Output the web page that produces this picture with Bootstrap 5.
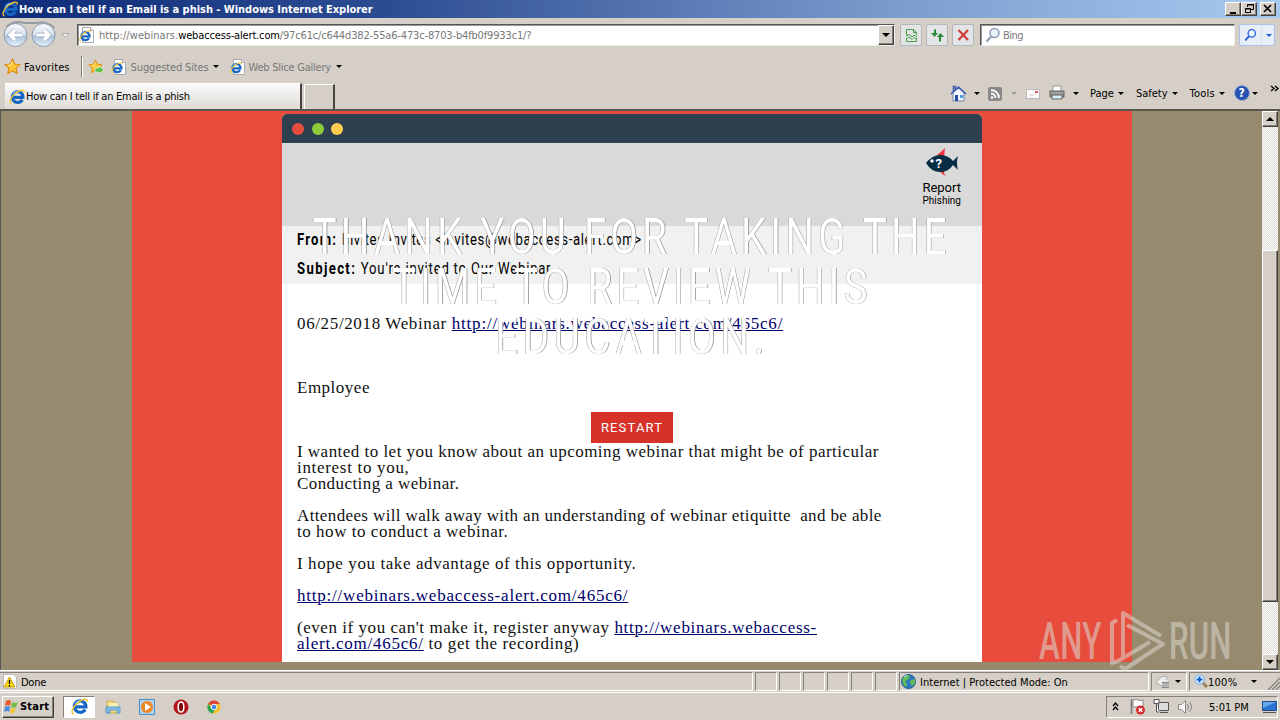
<!DOCTYPE html>
<html lang="en">
<head>
  <meta charset="UTF-8" />
  <meta name="viewport" content="width=device-width, initial-scale=1" />
  <title>How can I tell if an Email is a phish</title>
  <link href="https://cdn.jsdelivr.net/npm/bootstrap@5.3.3/dist/css/bootstrap.min.css" rel="stylesheet">
  <style>
    body { width: 1280px; height: 720px; overflow: hidden; background: #d5cfc7; color: #000; font: 11px/14px "DejaVu Sans Condensed", "DejaVu Sans", sans-serif; }
    svg { display: block; flex: none; }
    .fit { display: inline-block; white-space: pre; flex: none; }
    .chrome-text .fit { padding-top: 2px; }
    .greyed { color: #777; }
    .caret { width: 0; height: 0; flex: none; border: 3px solid transparent; border-top-color: #000; border-bottom: 0; }
    .bevel { background: #d5cfc7; border: 1px solid; border-color: #fff #404040 #404040 #fff; box-shadow: inset -1px -1px #858078; }
    .sunken { border: 1px solid; border-color: #858078 #fff #fff #858078; }

    .title-bar { height: 18px; background: linear-gradient(90deg, #0f2c78, #2c4c92 30%, #7b9ccd 70%, #a6caf0); padding-left: 2px; color: #fff; font-weight: bold; }
    .win-btn { width: 16px; height: 14px; }
    .address-row { height: 34px; padding-left: 2px; }
    .field { height: 22px; background: #fff; border: 1px solid; border-color: #555 #eee #eee #555; box-shadow: inset 1px 1px #999; }
    .tool-btn { width: 22px; height: 22px; border: 1px solid #b4b7bc; border-radius: 2px; background: #e3e4e6; }
    .fav-row { height: 29px; }
    .tab-row { height: 28px; padding-left: 5px; }
    .tab-on { width: 297px; height: 26px; background: linear-gradient(#fafafa, #dedbd6); border-right: 2px solid #444; border-top: 1px solid #fff; }
    .tab-new { width: 31px; height: 25px; border: 1px solid #fff; border-right: 2px solid #444; border-bottom: 0; }

    .viewport { height: 561px; background: #978b6f; border-left: 1px solid #555; border-top: 2px solid #5a574f; }
    .scroller { width: 16px; margin-right: 2px; background: repeating-conic-gradient(#fff 0 25%, #dcd8d2 0 50%) 0 0/2px 2px; }
    .scroller .bevel { width: 16px; height: 16px; }
    .thumb { margin-top: 123px; height: 352px !important; }
    .red-page { width: 1000px; height: 551px; margin-left: 131px; background: #e84c3d; padding-top: 3px; }
    .mail { width: 700px; height: 548px; background: #fff; border-radius: 5px 5px 0 0; overflow: hidden; }
    .mail-bar { height: 29px; background: #2e3f50; padding-left: 10px; gap: 7.5px; }
    .dot { width: 12px; height: 12px; border-radius: 50%; }
    .mail-tools { height: 83px; background: #d9d9d9; font-family: Roboto, sans-serif; }
    .mail-head { height: 58px; background: #f1f1f1; padding: 4px 15px 0; font: 16px/20px Roboto, sans-serif; }
    .mail-head > div { height: 29px; white-space: pre; }
    .squeeze { display: inline-block; transform: scaleX(.82); transform-origin: 0 50%; }
    .mail-body { padding: 32px 15px 0; font: 17px/16px "Liberation Serif", serif; color: #111; }
    .mail-body > div { height: 16px; white-space: pre; }
    .mail-body a { color: #00006b; text-underline-offset: 1px; text-decoration-thickness: 1px; }

    .thanks { left: 0; right: 0; top: 101px; }
    .thanks h1 { font: 400 50px/50px Roboto, sans-serif; color: #fff; margin: 0; text-shadow: .8px 0 #8a8a8a, -.6px 0 #a5a5a5; will-change: transform; }
    .thanks h1 span { transform: scaleX(.8); }
    .restart { margin-top: 50px; width: 82px; height: 31px; border: 0; border-radius: 0; padding: 0; background: #d73229; color: #fff; font: 13px/31px Roboto, sans-serif; }

    .watermark { left: 1038px; top: 608px; width: 196px; height: 66px; opacity: .55; }
    .status { height: 22px; border-top: 1px solid #fff; padding-top: 1px; gap: 2px; }
    .status > div { height: 19px; }
    .cell { width: 22px; }
    .task-bar { height: 27px; border-top: 1px solid #fff; padding-left: 2px; padding-top: 1px; }
    .start { width: 52px; height: 22px; font-weight: bold; }
    .running { width: 32px; height: 22px; background: #fff; }
    .tray { width: 172px; height: 22px; }
  </style>
</head>
<body>

  <svg width="0" height="0" class="position-absolute">
    <symbol id="ie" viewBox="0 0 16 16">
      <path d="M13.300 10.800A5.400 5.400 0 1 1 14 8.400H4.600" fill="none" stroke="#1766c4" stroke-width="3.100"/>
      <path d="M4 6.200A4.900 4.900 0 0 1 9 2.800" fill="none" stroke="#63b5f2" stroke-width="1.400"/>
      <path d="M2.600 15C-.8 14 1.800 8 6.500 4.300 10.500 1 16-.4 15 3.600" fill="none" stroke="#f1c43a" stroke-width="1.400"/>
    </symbol>
    <symbol id="iepage" viewBox="0 0 16 16">
      <path d="M3.500.5h8l3 3v12h-11z" fill="#fff" stroke="#a9a9a9"/>
      <path d="M11.500.5v3h3" fill="#eee" stroke="#a9a9a9"/>
      <use href="#ie" x="0" y="3" width="12" height="12"/>
    </symbol>
    <symbol id="star" viewBox="0 0 16 16">
      <path d="M8 1l2.100 4.600 5 .6-3.700 3.400 1 5L8 12.100 3.600 14.600l1-5L.9 6.200l5-.6z" fill="#fbc62f" stroke="#dc8a17"/>
      <path d="M8 3.500L6.700 6.600l-3 .4" fill="none" stroke="#fff2a4"/>
    </symbol>
    <symbol id="lens" viewBox="0 0 16 16">
      <circle cx="9.500" cy="6" r="4.500" fill="#eef5fc" stroke="currentColor" stroke-width="1.600"/>
      <path d="M6.300 9.400L1.500 14.500" stroke="currentColor" stroke-width="2.200"/>
    </symbol>
  </svg>

  <!-- Title bar -->
  <div class="title-bar d-flex align-items-center">
    <svg width="16" height="16"><use href="#ie"/></svg>
    <span class="fit" data-w="354" style="margin-left:1px;padding-top:1px">How can I tell if an Email is a phish - Windows Internet Explorer</span>
    <div class="d-flex ms-auto me-1">
      <div class="bevel win-btn"><svg width="14" height="12"><path d="M4 9h6v2H4z"/></svg></div>
      <div class="bevel win-btn"><svg width="14" height="12" fill="none" stroke="#000"><path d="M5.500 4V1.500h6v5H9M5 2h7M3.500 5.500h5v4h-5zM3 6h6"/></svg></div>
      <div class="bevel win-btn" style="margin-left:3px"><svg width="14" height="12"><path d="M3 2l7 7M10 2L3 9" stroke="#000" stroke-width="1.700"/></svg></div>
    </div>
  </div>

  <!-- Address and search -->
  <div class="address-row chrome-text d-flex align-items-center">
    <svg width="75" height="28" viewBox="0 0 75 28">
      <defs><linearGradient id="orb" x2="0" y2="1"><stop offset="0" stop-color="#fafbfc"/><stop offset=".5" stop-color="#d3deea"/><stop offset=".55" stop-color="#a9c0dc"/><stop offset="1" stop-color="#e9f4fb"/></linearGradient></defs>
      <path d="M4 6Q13-1 22 2h12q12-2 18 5" fill="none" stroke="#9a9ca4" stroke-width="2"/>
      <g fill="url(#orb)" stroke="#8d99ac"><circle cx="13.500" cy="14" r="11.500"/><circle cx="41.500" cy="14" r="11.500"/></g>
      <path d="M20 14H8m5-5l-5 5 5 5M35 14h12m-5-5l5 5-5 5" fill="none" stroke="#93a7c2" stroke-width="4.500"/>
      <path d="M20 14H8m5-5l-5 5 5 5M35 14h12m-5-5l5 5-5 5" fill="none" stroke="#fff" stroke-width="3.200"/>
      <path d="M60 12.500h7l-3.500 4z" fill="#eee" stroke="#aaa"/>
    </svg>
    <div class="field d-flex align-items-center" style="width:818px">
      <svg style="margin:0 4px 0 1px" width="16" height="16"><use href="#iepage"/></svg>
      <span class="fit greyed" data-w="79">http://webinars.</span><span class="fit" data-w="102">webaccess-alert.com</span><span class="fit greyed" data-w="252">/97c61c/c644d382-55a6-473c-8703-b4fb0f9933c1/?</span>
      <div class="bevel d-flex align-items-center justify-content-center ms-auto h-100" style="width:16px"><i class="caret" style="border-width:4px 4px 0"></i></div>
    </div>
    <div class="d-flex gap-1 ms-1" style="padding-left:1px">
      <div class="tool-btn p-1"><svg width="13" height="13" viewBox="0 0 13 13" fill="none" stroke="#43a047"><path d="M1.500 6V.5h7l3 3V6M1.500 9v3.500h10V9M8.500.5v3h3M1 7l3-1.500 3 2.500 2-2 3 2M1 10l3-2 3 2.500 2-2 3 2"/></svg></div>
      <div class="tool-btn p-1"><svg width="13" height="13" viewBox="0 0 13 13" fill="#258b38"><path d="M5 0L3 1v3H0l3.500 4L7 4H5zM8 13l2-1V8h3L9.500 4 6 8h2z"/></svg></div>
      <div class="tool-btn p-1"><svg width="13" height="13" viewBox="0 0 13 13" stroke="#d23b3b" stroke-width="2.200"><path d="M1.500 1l9.500 10M11 1l-9.500 10"/></svg></div>
    </div>
    <div class="field d-flex align-items-center greyed" style="width:255px;margin-left:6px">
      <svg class="ms-1" style="margin-right:2px" width="16" height="16" color="#8ba0b6"><use href="#lens"/></svg>
      <span class="fit" data-w="20">Bing</span>
    </div>
    <div class="tool-btn d-flex align-items-center ms-1" style="width:36px;border-color:#abc1e8;background:#e8eef8;color:#2260d8">
      <svg class="mx-1" width="13" height="14"><use href="#lens"/></svg>
      <div class="h-100 border-start d-flex align-items-center ps-1"><i class="caret" style="border-top-color:#2260d8"></i></div>
    </div>
  </div>

  <!-- Favorites -->
  <div class="fav-row chrome-text d-flex align-items-center greyed">
    <svg class="ms-1" width="17" height="17"><use href="#star"/></svg>
    <span class="fit text-black" data-w="46" style="margin-left:3px">Favorites</span>
    <div class="sunken" style="width:2px;height:22px;margin:0 5px 0 11px"></div>
    <svg width="16" height="16" viewBox="0 0 16 16"><use href="#star" width="15" height="15"/><path d="M7 9h4V7l5 4-5 4v-2H7z" fill="#56bd45" stroke="#fff" stroke-width=".6"/></svg>
    <svg style="margin:0 4px 0 7px" width="16" height="16"><use href="#iepage"/></svg>
    <span class="fit" data-w="78">Suggested Sites</span><i class="caret" style="margin:0 11px 0 4px"></i>
    <svg style="margin-right:3px" width="16" height="16"><use href="#iepage"/></svg>
    <span class="fit" data-w="82">Web Slice Gallery</span><i class="caret" style="margin-left:5px"></i>
  </div>

  <!-- Tabs and command bar -->
  <div class="tab-row d-flex align-items-end">
    <div class="tab-on d-flex align-items-center">
      <svg class="ms-1" width="16" height="16"><use href="#ie"/></svg>
      <span class="fit" data-w="164" style="margin-left:1px">How can I tell if an Email is a phish</span>
    </div>
    <div class="tab-new" style="margin-left:2px"></div>
    <div class="chrome-text d-flex align-items-center h-100 ms-auto" style="width:330px;padding-bottom:4px">
      <svg width="17" height="17" viewBox="0 0 17 17"><path d="M3 8v8h11V8L8.500 3z" fill="#f1f5fd" stroke="#7083b4"/><path d="M1 9l7.500-7L16 9M3.500 6V1.500h2V4" fill="none" stroke="#405cae" stroke-width="1.600"/><path d="M5 10h3v6H5z" fill="#274da0"/><path d="M10 10h3v3h-3z" fill="#4ba0e0"/></svg>
      <i class="caret" style="margin:0 8px 0 7px"></i>
      <svg style="margin-top:2px" width="14" height="14" viewBox="0 0 14 14"><rect width="14" height="14" rx="2" fill="#898989"/><path d="M3 3a8 8 0 0 1 8 8M3 6.500A4.500 4.500 0 0 1 7.500 11" fill="none" stroke="#fff" stroke-width="1.800"/><circle cx="4" cy="10.500" r="1.300" fill="#fff"/></svg>
      <i class="caret" style="margin:0 9px 0 9px;border-top-color:#999"></i>
      <svg width="14" height="11"><path d="M.5 1.500h13v9H.5z" fill="#fafafa" stroke="#bbb"/><path d="M9 3h3v2H9z" fill="#dc5d64"/><path d="M3 7h5" stroke="#ccc"/></svg>
      <svg style="margin-left:9px" width="16" height="16" viewBox="0 0 16 16"><path d="M4 1h8v6H4z" fill="#fff" stroke="#999"/><path d="M1 6h14v6H1z" fill="#888" stroke="#666"/><path d="M3 10h10v4H3z" fill="#d8eef8" stroke="#666"/><path d="M2 8h12" stroke="#bbb"/></svg>
      <i class="caret" style="margin:0 11px 0 8px"></i>
      <span class="fit" data-w="24">Page</span><i class="caret" style="margin:0 12px 0 4px"></i>
      <span class="fit" data-w="32">Safety</span><i class="caret" style="margin:0 12px 0 4px"></i>
      <span class="fit" data-w="25">Tools</span><i class="caret" style="margin:0 9px 0 4px"></i>
      <svg width="16" height="16"><circle cx="8" cy="8" r="7.500" fill="#2852b1" stroke="#97aeda"/><text x="4.600" y="12.300" font-size="12" font-weight="bold" fill="#fff">?</text></svg>
      <i class="caret" style="margin:0 12px 0 2px"></i>
      <svg style="margin-top:-10px" width="10" height="7" fill="none" stroke="#000" stroke-width="1.400"><path d="M1 1l3 2.500L1 6M5 1l3 2.500L5 6"/></svg>
    </div>
  </div>

  <!-- Page shown in the browser -->
  <div class="viewport d-flex">
    <div class="red-page position-relative d-flex justify-content-center">
      <div class="mail">
        <div class="mail-bar d-flex align-items-center">
          <div class="dot" style="background:#e84c3d"></div>
          <div class="dot" style="background:#8ecb3c"></div>
          <div class="dot" style="background:#ffcc4d"></div>
        </div>
        <div class="mail-tools d-flex flex-column align-items-end" style="padding:5px 21px 0">
          <svg width="40" height="30" viewBox="0 0 40 30"><path d="M16 7q4-3 8-7l-1 10zM18 23l6 5-2-8z" fill="#ee3343"/><path d="M5 15Q12 6 21 7q7 1 11 6l5-5q-2 7 0 14l-5-5q-4 6-11 7Q11 25 5 15z" fill="#092d43"/><circle cx="11" cy="13" r="1.700" fill="#fff"/><text x="14.500" y="20" font-size="13" font-weight="bold" fill="#fff" font-family="Roboto">?</text></svg>
          <span class="fit" data-w="39" style="font-size:13px;line-height:15px;margin-top:2px">Report</span>
          <span class="fit" data-w="39" style="font-size:10px;line-height:11px">Phishing</span>
        </div>
        <div class="mail-head">
          <div><span class="squeeze"><b class="fit" data-w="55">From: </b><span class="fit" data-w="366">Invites Invites &lt;invites@webaccess-alert.com&gt;</span></span></div>
          <div><span class="squeeze"><b class="fit" data-w="78">Subject: </b><span class="fit" data-w="232">You're invited to Our Webinar</span></span></div>
        </div>
        <div class="mail-body">
          <div><span class="fit" data-w="155">06/25/2018 Webinar </span><a href="#" class="fit" data-w="331">http://webinars.webaccess-alert.com/465c6/</a></div>
          <div></div><div></div><div></div>
          <div><span class="fit" data-w="73">Employee</span></div>
          <div></div><div></div><div></div>
          <div><span class="fit" data-w="582">I wanted to let you know about an upcoming webinar that might be of particular</span></div>
          <div><span class="fit" data-w="113">interest to you,</span></div>
          <div><span class="fit" data-w="162">Conducting a webinar.</span></div>
          <div></div>
          <div><span class="fit" data-w="585">Attendees will walk away with an understanding of webinar etiquitte  and be able</span></div>
          <div><span class="fit" data-w="211">to how to conduct a webinar.</span></div>
          <div></div>
          <div><span class="fit" data-w="339">I hope you take advantage of this opportunity.</span></div>
          <div></div>
          <div><a href="#" class="fit" data-w="331">http://webinars.webaccess-alert.com/465c6/</a></div>
          <div></div>
          <div><span class="fit" data-w="317">(even if you can't make it, register anyway </span><a href="#" class="fit" data-w="203">http://webinars.webaccess-</a></div>
          <div><a href="#" class="fit" data-w="127">alert.com/465c6/</a><span class="fit" data-w="156"> to get the recording)</span></div>
        </div>
      </div>
      <!-- Closing message lies over the mail -->
      <div class="thanks position-absolute d-flex flex-column align-items-center">
        <h1 class="d-flex flex-column align-items-center">
          <span class="fit" data-w="797">THANK YOU FOR TAKING THE</span>
          <span class="fit" data-w="600">TIME TO REVIEW THIS</span>
          <span class="fit" data-w="342">EDUCATION.</span>
        </h1>
        <button class="btn restart"><span class="fit" data-w="62">RESTART</span></button>
      </div>
    </div>
    <div class="scroller ms-auto d-flex flex-column">
      <div class="bevel d-flex align-items-center justify-content-center"><i class="caret" style="border-width:4px 4px 0;transform:rotate(180deg)"></i></div>
      <div class="bevel thumb"></div>
      <div class="bevel mt-auto d-flex align-items-center justify-content-center"><i class="caret" style="border-width:4px 4px 0"></i></div>
    </div>
  </div>

  <svg class="watermark position-absolute" viewBox="0 0 196 66" fill="#dcd9cf">
    <g font-family="Roboto" font-size="52" font-weight="500"><text transform="translate(1 51) scale(.6 1)" textLength="104" lengthAdjust="spacing">ANY</text><text transform="translate(131 51) scale(.6 1)" textLength="104" lengthAdjust="spacing">RUN</text></g>
    <path d="M79 12L74 15V55L80 53L112 34M123 28L85 5V49M89 17L125 36 87 61 82 58" fill="none" stroke="#dcd9cf" stroke-width="4" stroke-linejoin="round"/>
  </svg>

  <!-- Status bar -->
  <div class="status chrome-text d-flex">
    <div class="sunken d-flex align-items-center" style="width:753px;border-left:0">
      <svg style="margin-left:3px" width="14" height="15"><path d="M.5.500h10l3 3v11H.5z" fill="#fff" stroke="#bbb"/><path d="M6.500 3L12 13H1z" fill="#ffda24" stroke="#c49a00"/><path d="M6.500 6v4m0 1v1.500" stroke="#000" stroke-width="1.300"/></svg>
      <span class="fit" data-w="25" style="margin-left:4px">Done</span>
    </div>
    <div class="sunken cell"></div><div class="sunken cell"></div><div class="sunken cell"></div><div class="sunken cell"></div><div class="sunken cell"></div><div class="sunken cell"></div>
    <div class="sunken d-flex align-items-center" style="width:250px">
      <svg width="17" height="17" viewBox="0 0 17 17"><circle cx="8.500" cy="8.500" r="7" fill="#2f77bd" stroke="#24608d"/><path d="M3 5q4-4 7-2l-2 4-3 1 2 3-1 3Q1 11 3 5zM11 7l4-1q1 5-3 7l-2-3z" fill="#62bf54"/><path d="M4 4l3-2" stroke="#c6eaff"/></svg>
      <span class="fit" data-w="148" style="margin-left:3px">Internet | Protected Mode: On</span>
    </div>
    <div class="sunken d-flex align-items-center" style="width:36px">
      <svg style="margin-left:3px" width="16" height="16"><path d="M1 9l5-6 5-1 2 5-6 5z" fill="#eee" stroke="#aaa"/><path d="M7 8h7v6H7z" fill="#888"/><path d="M8.500 8V6q2-3 4 0v2M7 10h7M7 12h7" stroke="#ddd" fill="none"/></svg>
      <i class="caret ms-1"></i>
    </div>
    <div class="sunken d-flex align-items-center flex-fill border-end-0">
      <svg style="margin-left:4px" width="14" height="15"><path d="M8 8l5 5" stroke="#9b7b56" stroke-width="2.500"/><circle cx="5.500" cy="5.500" r="4.800" fill="#d8efff" stroke="#77aade"/><path d="M5.500 2.500v6M2.500 5.500h6" stroke="#1565c9" stroke-width="2"/></svg>
      <span class="fit" data-w="29">100%</span><i class="caret" style="margin-left:14px"></i>
      <svg class="ms-auto align-self-end" width="14" height="14" stroke="#77736d" stroke-width="1.200"><path d="M2 14L14 2M6 14l8-8M10 14l4-4"/></svg>
    </div>
  </div>

  <!-- Task bar -->
  <div class="task-bar chrome-text d-flex align-items-center">
    <div class="bevel start d-flex align-items-center">
      <svg width="16" height="16" viewBox="0 0 16 16"><path d="M3 2q3-2 5 0L7 7Q5 5 2 7z" fill="#e85a2c"/><path d="M9 3q3 2 6 0l-2 5q-3 1-5 0z" fill="#74b843"/><path d="M2 8q3-2 5 0l-1 5q-2-2-5 0z" fill="#4a8be0"/><path d="M8 9q3 1 5 0l-2 5q-3 1-4-1z" fill="#f6c433"/></svg>
      <span class="fit" data-w="29" style="margin-left:1px;padding-top:0">Start</span>
    </div>
    <div class="sunken running d-flex align-items-center justify-content-center" style="margin-left:9px"><svg width="17" height="17"><use href="#ie"/></svg></div>
    <svg style="margin-left:10px" width="16" height="16"><path d="M2 2h6l1 2h4v10H2z" fill="#f3d97a" stroke="#c9ac50"/><path d="M4 4h9v4H4z" fill="#fdf1b0"/><path d="M1 8h14v6h-3v-3H5v3H1z" fill="#82bce4" stroke="#5c9acb"/></svg>
    <svg style="margin-left:18px" width="16" height="16"><path d="M.5.500h15v15H.5z" fill="#afd3ef" stroke="#4a8fc9"/><circle cx="8" cy="8" r="6" fill="#ef8620"/><path d="M6 4l6 4-6 4z" fill="#fff"/></svg>
    <svg style="margin-left:18px" width="16" height="16"><circle cx="8" cy="8" r="7.500" fill="#b3141c"/><ellipse cx="8" cy="8" rx="2.800" ry="5" fill="#7b0a10" stroke="#fff" stroke-width="1.500"/></svg>
    <svg style="margin-left:18px" width="14" height="14" viewBox="0 0 16 16"><circle cx="8" cy="8" r="7.500" fill="#f4c22b"/><path d="M8 8L1.500 4.200A7.500 7.500 0 0 1 14.500 4.500H8z" fill="#dc4437"/><path d="M1.500 4.200L5 10l4 1-2.500 4.400A7.500 7.500 0 0 1 1.500 4.200z" fill="#26a15a"/><circle cx="8" cy="8" r="3.200" fill="#4285f4" stroke="#fff"/></svg>
    <div class="sunken tray d-flex align-items-center ms-auto" style="margin-right:2px">
      <svg style="margin-left:5px" width="7" height="9" fill="none" stroke="#000" stroke-width="1.300"><path d="M1 4l2.500-3L6 4M1 8l2.500-3L6 8"/></svg>
      <svg style="margin-left:11px" width="16" height="17"><path d="M1.500 1v15" stroke="#777" stroke-width="1.500"/><path d="M3 2q4-1 5 0t5 0v7H3z" fill="#fff" stroke="#888"/><circle cx="10.500" cy="12" r="4.500" fill="#d52b2b"/><path d="M8.700 10.200l3.600 3.600m0-3.600l-3.600 3.600" stroke="#fff" stroke-width="1.500"/></svg>
      <svg style="margin-left:7px" width="17" height="17"><path d="M5.500 4.500h10v8h-10z" fill="#ddd" stroke="#555"/><path d="M7 14.500h8M1 1.500h5v4H1zM3.500 6v8H6" fill="#fff" stroke="#555"/></svg>
      <svg style="margin-left:7px" width="17" height="16" fill="none" stroke="#888"><path d="M1.500 5.500h3l4-4v13l-4-4h-3z" fill="#f6f6f6"/><path d="M10.500 5q2 3 0 6M12.500 3q4 5 0 10"/></svg>
      <span class="fit" data-w="40" style="margin-left:15px">5:01 PM</span>
      <svg class="ms-auto" width="15" height="14"><path d="M.5 1.500h14v9H.5z" fill="#2c73d2" stroke="#234b88"/><path d="M1 2h13l-13 6z" fill="#69a9ee"/><path d="M1 12.500h13" stroke="#555"/></svg>
    </div>
  </div>

  <script src="https://cdn.jsdelivr.net/npm/bootstrap@5.3.3/dist/js/bootstrap.bundle.min.js"></script>
  <script>
    // Track each label so that it fills its own width
    document.querySelectorAll('.fit').forEach(el => {
      const extra = Number(el.dataset.w) - el.offsetWidth;
      el.style.letterSpacing = (extra / el.textContent.length) + 'px';
    });
  </script>
</body>
</html>
